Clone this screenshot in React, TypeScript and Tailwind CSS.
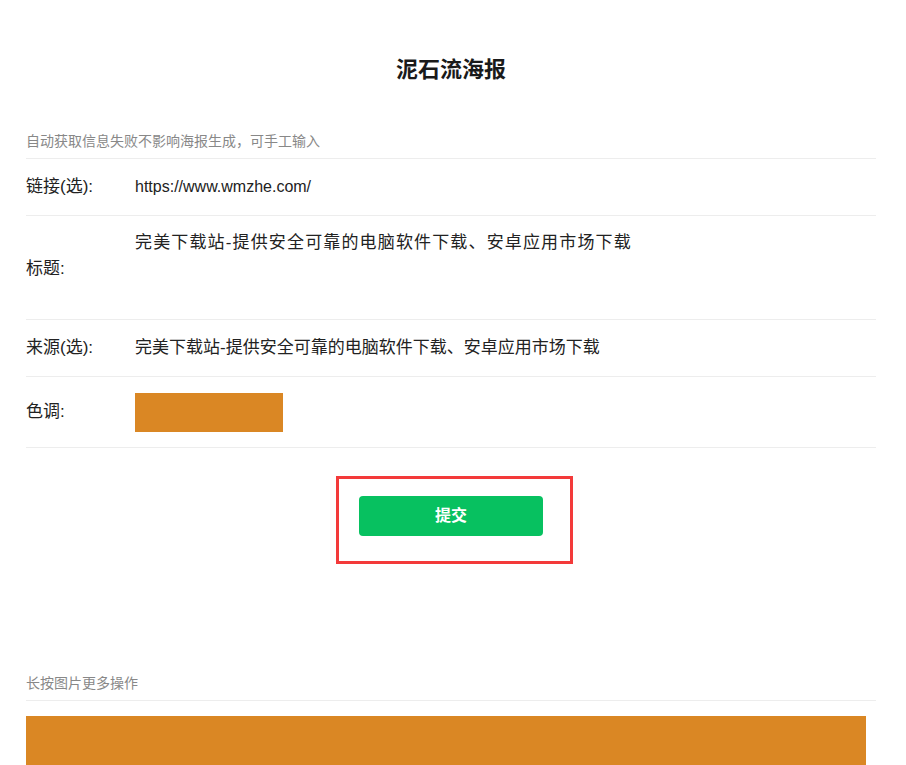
import React from 'react';

const font = "font-['Liberation_Sans','Noto_Sans_CJK_SC',sans-serif]";

const Row = ({ label, height, children }: { label: string; height: string; children: React.ReactNode }) => (
  <div className={`flex items-center border-b border-[#ededed] ${height}`}>
    <div className="w-[109px] shrink-0 text-[17px] text-[#222]">{label}</div>
    <div className="flex-1">{children}</div>
  </div>
);

const App = () => {
  const title = '完美下载站-提供安全可靠的电脑软件下载、安卓应用市场下载';
  return (
    <div className={`h-[765px] w-[906px] overflow-hidden bg-white ${font}`}>
      <div className="mx-[26px] w-[850px]">
        {/* Header */}
        <h1 className="pt-[57px] text-center text-[22px] leading-[26px] font-bold text-[#1a1a1a]">泥石流海报</h1>

        <div className="mt-[48px] border-b border-[#ededed] pb-[7px] text-[14px] leading-[20px] text-[#888]">
          自动获取信息失败不影响海报生成，可手工输入
        </div>

        {/* Form */}
        <Row label="链接(选):" height="h-[57px]">
          <span className="text-[16px] text-[#222]">https://www.wmzhe.com/</span>
        </Row>

        <div className="flex h-[104px] items-center border-b border-[#ededed]">
          <div className="w-[109px] shrink-0 pt-[2px] text-[17px] text-[#222]">标题:</div>
          <div className="h-full flex-1 pt-[16px]">
            <textarea
              readOnly
              value={title}
              className="h-[76px] w-full resize-none bg-transparent text-[17px] leading-[22px] tracking-[1.15px] text-[#222] outline-none"
            />
          </div>
        </div>

        <Row label="来源(选):" height="h-[57px]">
          <span className="text-[17px] text-[#222]">{title}</span>
        </Row>

        <Row label="色调:" height="h-[71px]">
          <div className="h-[39px] w-[148px] bg-[#da8724]"></div>
        </Row>

        {/* Submit */}
        <div className="ml-[310px] mt-[28px] w-[237px] border-[3px] border-[#f33a3a] pl-[20px] pt-[17px] pb-[25px]">
          <button className="h-[40px] w-[184px] rounded-[4px] bg-[#07c160] text-[16px] font-bold text-white">提交</button>
        </div>

        {/* Result */}
        <div className="mt-[109px] border-b border-[#ededed] pb-[7px] text-[14px] leading-[20px] text-[#888]">
          长按图片更多操作
        </div>
        <div className="mt-[15px] h-[200px] w-[840px] bg-[#da8724]"></div>
      </div>
    </div>
  );
};

export default App;
